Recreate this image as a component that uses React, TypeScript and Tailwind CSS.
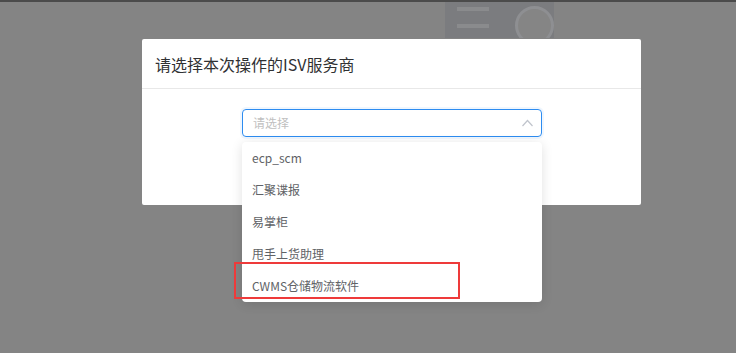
const options = ["ecp_scm", "汇聚谍报", "易掌柜", "甩手上货助理", "CWMS仓储物流软件"];

export default function App() {
  return (
    <div
      className="relative h-[353px] w-[736px] overflow-hidden bg-[#848484]"
      style={{ fontFamily: '"Noto Sans CJK SC", "Noto Sans", sans-serif' }}
    >
      {/* dimmed page behind the overlay */}
      <div className="h-[2px] bg-[#4b4b4b]" />
      <div className="ml-[445px] flex h-[36px] w-[109px] overflow-hidden bg-[#7b7c7f]">
        <div className="ml-[12px] flex w-[38px] flex-col gap-[13px] pt-[5px]">
          <div className="h-[4px] bg-[#8a8b8d]" />
          <div className="h-[4px] bg-[#8a8b8d]" />
        </div>
        <div className="ml-[26px] mt-[4px] h-[39px] w-[39px] shrink-0 rounded-full border-[3px] border-[#8e8f92] bg-[#858585]" />
      </div>

      {/* modal */}
      <div className="absolute left-[142px] top-[39px] h-[166px] w-[499px] rounded-[2px] bg-white">
        <div className="flex h-[50px] items-center border-b border-[#e8e8e8] px-[13px] text-[16px] text-[#303133]">
          请选择本次操作的ISV服务商
        </div>
        <div className="relative ml-[100px] mt-[20px] w-[300px]">
          <div className="flex h-[28px] items-center justify-between rounded-[4px] border border-[#2d8cf0] pl-[10px] pr-[8px] shadow-[0_0_0_2px_rgba(45,140,240,0.08)]">
            <span className="text-[12px] text-[#bfbfbf]">请选择</span>
            <svg width="11" height="8" viewBox="0 0 11 8" fill="none" className="text-[#c0c4cc]">
              <polyline points="0.5,7 5.5,1.5 10.5,7" stroke="currentColor" strokeWidth="1.2" />
            </svg>
          </div>
          <div className="absolute left-0 top-[33px] w-[300px] rounded-[4px] bg-white shadow-[0_2px_12px_rgba(0,0,0,0.12)]">
            {options.map((o) => (
              <div key={o} className="flex h-[32px] items-center px-[10px] text-[12px] text-[#606266]">
                {o}
              </div>
            ))}
          </div>
        </div>
      </div>

      {/* annotation */}
      <div className="absolute left-[234px] top-[262px] h-[37px] w-[226px] border-2 border-[#ee3a3a]" />
    </div>
  );
}
